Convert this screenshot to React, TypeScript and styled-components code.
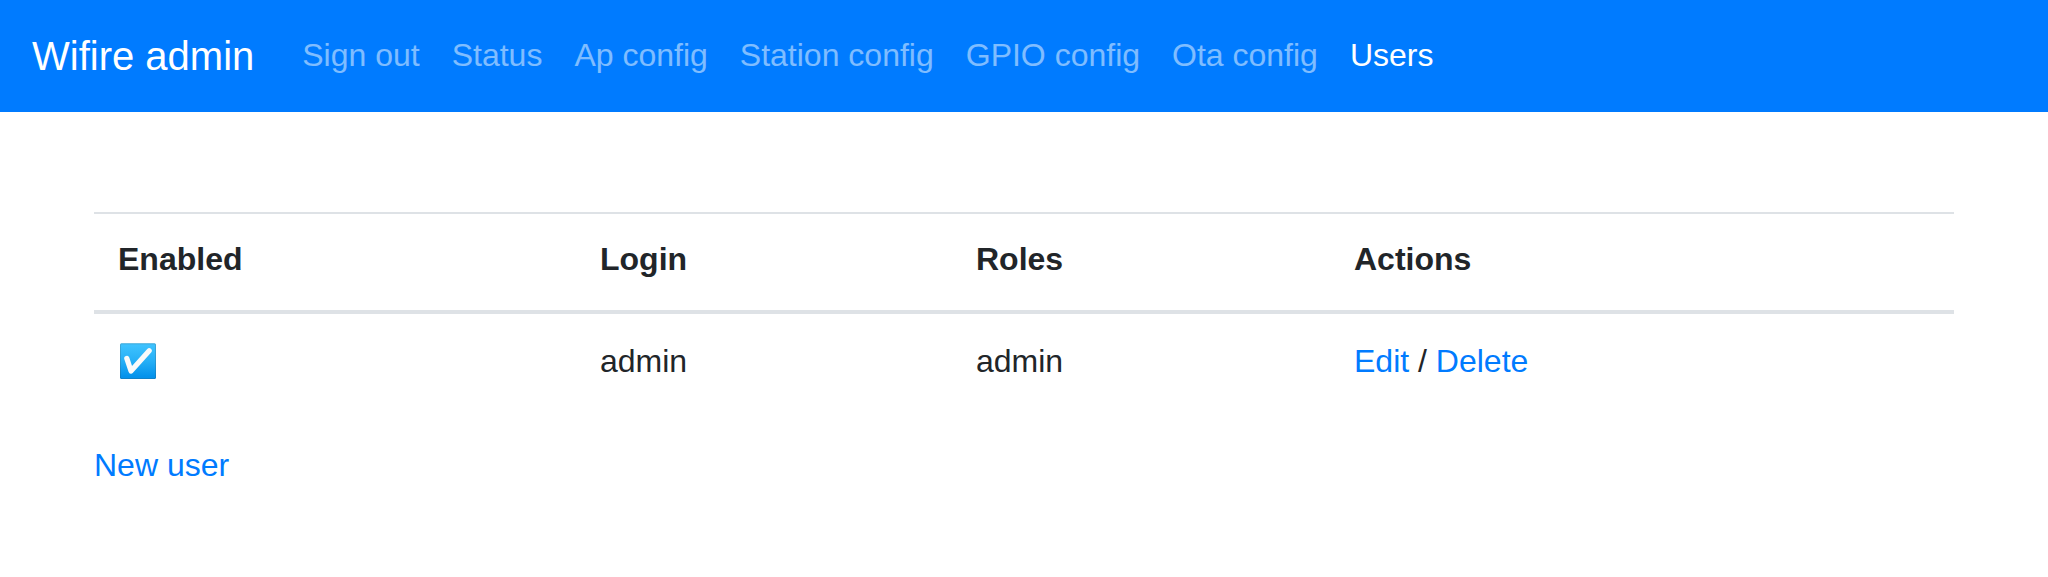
import React from "react";
import styled, { createGlobalStyle } from "styled-components";

const Global = createGlobalStyle`
  *, *::before, *::after { box-sizing: border-box; }
  body { margin: 0; background: #fff; color: #212529; font: 400 32px/48px "Liberation Sans", Arial, sans-serif; }
`;
const Navbar = styled.nav`
  display: flex; align-items: center; height: 112px; padding: 0 32px; background: #007bff;
`;
const Brand = styled.a`
  margin-right: 32px; font-size: 40px; line-height: 60px; color: #fff; text-decoration: none; white-space: nowrap;
`;
const NavList = styled.ul`display: flex; margin: 0; padding: 0; list-style: none;`;
const NavLink = styled.a<{ $active?: boolean }>`
  display: block; padding: 15px 16px 17px; white-space: nowrap; text-decoration: none;
  color: ${(p) => (p.$active ? "#fff" : "rgba(255, 255, 255, 0.5)")};
`;
const Content = styled.main`padding: 100px 94px 0;`;
const Table = styled.table`
  width: 100%; margin-bottom: 31px; border-collapse: collapse; table-layout: fixed;
`;
const HeadCell = styled.th<{ $width: number }>`
  width: ${(p) => p.$width}px; padding: 21px 24px 27px; text-align: left; vertical-align: bottom;
  border-top: 2px solid #dee2e6; border-bottom: 4px solid #dee2e6;
`;
const Cell = styled.td`padding: 23px 24px 25px; vertical-align: top;`;
const Link = styled.a`color: #007bff; text-decoration: none;`;
const Check = styled.svg`display: block; margin-top: 6px; width: 40px; height: 38px;`;

const links = ["Sign out", "Status", "Ap config", "Station config", "GPIO config", "Ota config", "Users"];
const columns = [
  { title: "Enabled", width: 482 },
  { title: "Login", width: 376 },
  { title: "Roles", width: 378 },
  { title: "Actions", width: 624 },
];

export default function App() {
  return (
    <>
      <Global />
      <Navbar>
        <Brand>Wifire admin</Brand>
        <NavList>
          {links.map((l) => <li key={l}><NavLink $active={l === "Users"}>{l}</NavLink></li>)}
        </NavList>
      </Navbar>
      <Content>
        <Table>
          <thead><tr>{columns.map((c) => <HeadCell key={c.title} $width={c.width}>{c.title}</HeadCell>)}</tr></thead>
          <tbody>
            <tr>
              <Cell>
                <Check viewBox="0 0 40 38" role="img" aria-label="Enabled">
                  <defs>
                    <linearGradient id="tile" x1="0" y1="0" x2="0" y2="1">
                      <stop offset="0" stopColor="#40c4ff" />
                      <stop offset="0.5" stopColor="#26aff6" />
                      <stop offset="0.92" stopColor="#0493ec" />
                      <stop offset="1" stopColor="#0491ea" />
                    </linearGradient>
                  </defs>
                  <rect x="2" y="0.3" width="36" height="35.7" rx="1.5" fill="url(#tile)" />
                  <rect x="2.5" y="0.8" width="35" height="34.7" rx="1.2" fill="none" stroke="#424242" strokeOpacity="0.2" />
                  <path d="M8.8 15.4L13 28L31.2 7.8" fill="none" stroke="#fafafa" strokeWidth="5.2" strokeLinecap="round" strokeLinejoin="round" />
                </Check>
              </Cell>
              <Cell>admin</Cell><Cell>admin</Cell>
              <Cell><Link>Edit</Link> / <Link>Delete</Link></Cell>
            </tr>
          </tbody>
        </Table>
        <Link>New user</Link>
      </Content>
    </>
  );
}
